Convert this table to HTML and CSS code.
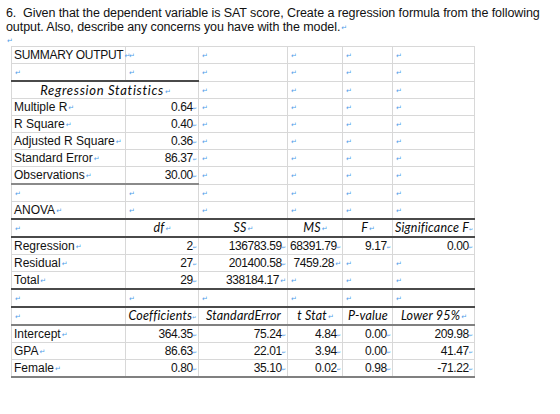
FILE: index.html
```html
<!DOCTYPE html>
<html>
<head>
<meta charset="utf-8">
<link rel="stylesheet" href="styles.css">
</head>
<body>
<div class="page">
  <p class="question">6.&nbsp; Given that the dependent variable is SAT score, Create a regression formula from the following output. Also, describe any concerns you have with the model.<span class="m">↵</span></p>
  <div class="lead"><span class="m">↵</span></div>
  <table class="sheet">
    <colgroup>
      <col class="c1"><col class="c2"><col class="c3"><col class="c4"><col class="c5"><col class="c6">
    </colgroup>
    <tr><td class="tight">SUMMARY OUTPUT<span class="m">↵</span></td><td><span class="m">↵</span></td><td><span class="m">↵</span></td><td><span class="m">↵</span></td><td><span class="m">↵</span></td><td><span class="m">↵</span></td></tr>
    <tr><td><span class="m">↵</span></td><td><span class="m">↵</span></td><td><span class="m">↵</span></td><td><span class="m">↵</span></td><td><span class="m">↵</span></td><td><span class="m">↵</span></td></tr>
    <tr><td colspan="2" class="hd wide tk-top">Regression Statistics<span class="m">↵</span></td><td><span class="m">↵</span></td><td><span class="m">↵</span></td><td><span class="m">↵</span></td><td><span class="m">↵</span></td></tr>
    <tr><td>Multiple R<span class="m">↵</span></td><td class="n">0.64<span class="d">↵</span></td><td><span class="m">↵</span></td><td><span class="m">↵</span></td><td><span class="m">↵</span></td><td><span class="m">↵</span></td></tr>
    <tr><td>R Square<span class="m">↵</span></td><td class="n">0.40<span class="d">↵</span></td><td><span class="m">↵</span></td><td><span class="m">↵</span></td><td><span class="m">↵</span></td><td><span class="m">↵</span></td></tr>
    <tr><td>Adjusted R Square<span class="m">↵</span></td><td class="n">0.36<span class="d">↵</span></td><td><span class="m">↵</span></td><td><span class="m">↵</span></td><td><span class="m">↵</span></td><td><span class="m">↵</span></td></tr>
    <tr><td>Standard Error<span class="m">↵</span></td><td class="n">86.37<span class="d">↵</span></td><td><span class="m">↵</span></td><td><span class="m">↵</span></td><td><span class="m">↵</span></td><td><span class="m">↵</span></td></tr>
    <tr><td class="gr-bot">Observations<span class="m">↵</span></td><td class="n gr-bot">30.00<span class="d">↵</span></td><td><span class="m">↵</span></td><td><span class="m">↵</span></td><td><span class="m">↵</span></td><td><span class="m">↵</span></td></tr>
    <tr><td><span class="m">↵</span></td><td><span class="m">↵</span></td><td><span class="m">↵</span></td><td><span class="m">↵</span></td><td><span class="m">↵</span></td><td><span class="m">↵</span></td></tr>
    <tr><td>ANOVA<span class="m">↵</span></td><td><span class="m">↵</span></td><td><span class="m">↵</span></td><td><span class="m">↵</span></td><td><span class="m">↵</span></td><td><span class="m">↵</span></td></tr>
    <tr class="tk-row"><td><span class="m">↵</span></td><td class="hd">df<span class="m">↵</span></td><td class="hd">SS<span class="m">↵</span></td><td class="hd">MS<span class="m">↵</span></td><td class="hd">F<span class="m">↵</span></td><td class="hd">Significance F<span class="d">↵</span></td></tr>
    <tr><td>Regression<span class="m">↵</span></td><td class="n">2<span class="d">↵</span></td><td class="n">136783.59<span class="d">↵</span></td><td class="n">68391.79<span class="d">↵</span></td><td class="n">9.17<span class="d">↵</span></td><td class="n">0.00<span class="d">↵</span></td></tr>
    <tr><td>Residual<span class="m">↵</span></td><td class="n">27<span class="d">↵</span></td><td class="n">201400.58<span class="d">↵</span></td><td class="n">7459.28<span class="m">↵</span></td><td><span class="m">↵</span></td><td><span class="m">↵</span></td></tr>
    <tr class="tk-end"><td>Total<span class="m">↵</span></td><td class="n">29<span class="d">↵</span></td><td class="n">338184.17<span class="m">↵</span></td><td><span class="m">↵</span></td><td><span class="m">↵</span></td><td><span class="m">↵</span></td></tr>
    <tr class="tk-end"><td><span class="m">↵</span></td><td><span class="m">↵</span></td><td><span class="m">↵</span></td><td><span class="m">↵</span></td><td><span class="m">↵</span></td><td><span class="m">↵</span></td></tr>
    <tr class="gr-end"><td><span class="m">↵</span></td><td class="hd">Coefficients<span class="d">↵</span></td><td class="hd">StandardError</td><td class="hd">t Stat<span class="m">↵</span></td><td class="hd">P-value</td><td class="hd">Lower 95%<span class="m">↵</span></td></tr>
    <tr><td>Intercept<span class="m">↵</span></td><td class="n">364.35<span class="d">↵</span></td><td class="n">75.24<span class="d">↵</span></td><td class="n">4.84<span class="d">↵</span></td><td class="n">0.00<span class="d">↵</span></td><td class="n">209.98<span class="d">↵</span></td></tr>
    <tr><td>GPA<span class="m">↵</span></td><td class="n">86.63<span class="d">↵</span></td><td class="n">22.01<span class="d">↵</span></td><td class="n">3.94<span class="d">↵</span></td><td class="n">0.00<span class="d">↵</span></td><td class="n">41.47<span class="d">↵</span></td></tr>
    <tr class="gr-end"><td>Female<span class="m">↵</span></td><td class="n">0.80<span class="d">↵</span></td><td class="n">35.10<span class="d">↵</span></td><td class="n">0.02<span class="d">↵</span></td><td class="n">0.98<span class="d">↵</span></td><td class="n">-71.22<span class="d">↵</span></td></tr>
  </table>
</div>
</body>
</html>
```

FILE: styles.css
```css
html, body {
  margin: 0;
  padding: 0;
  background: #ffffff;
}

.page {
  padding: 6px 0 0 6px;
  font-family: "Liberation Sans", Arial, sans-serif;
  color: #111111;
}

.question {
  margin: 0;
  width: 545px;
  font-size: 12.5px;
  line-height: 14px;
  letter-spacing: -0.08px;
}

.lead {
  height: 12px;
  line-height: 10px;
}

.m, .d {
  color: #4e9de8;
  font-size: 7px;
  line-height: 1;
  font-style: normal;
  font-family: "DejaVu Sans", sans-serif;
  vertical-align: 1px;
  margin-left: 1px;
  letter-spacing: 0;
}

.d {
  font-size: 5px;
  margin-left: 0;
}

.sheet {
  margin-left: 5px;
  border-collapse: collapse;
  table-layout: fixed;
  width: 463px;
  font-size: 12px;
}

.c1 { width: 114px; }
.c2 { width: 73px; }
.c3 { width: 89px; }
.c4 { width: 55px; }
.c5 { width: 50px; }
.c6 { width: 82px; }

.sheet td {
  border: 1px solid #d8d8d8;
  height: 16px;
  padding: 0 1px 0 2px;
  line-height: 14px;
  white-space: nowrap;
  vertical-align: middle;
}

.sheet td.tight {
  letter-spacing: -0.3px;
}

.sheet td.n {
  text-align: right;
  letter-spacing: -0.4px;
}

.sheet td.hd {
  text-align: center;
  font-family: Lato, "Open Sans", sans-serif;
  font-style: italic;
  font-size: 12.5px;
  letter-spacing: 0.2px;
  color: #0a0a0a;
}

.sheet td.wide {
  font-size: 13px;
  letter-spacing: 0.7px;
}

.sheet td.tk-top {
  border-top: 2px solid #4a4a4a;
}

.sheet td.gr-bot {
  border-bottom: 2px solid #8a8a8a;
}

.tk-row td {
  border-top: 2px solid #4a4a4a;
  border-bottom: 2px solid #4a4a4a;
}

.tk-end td {
  border-bottom: 2px solid #4a4a4a;
}

.gr-end td {
  border-bottom: 2px solid #808080;
}
```
